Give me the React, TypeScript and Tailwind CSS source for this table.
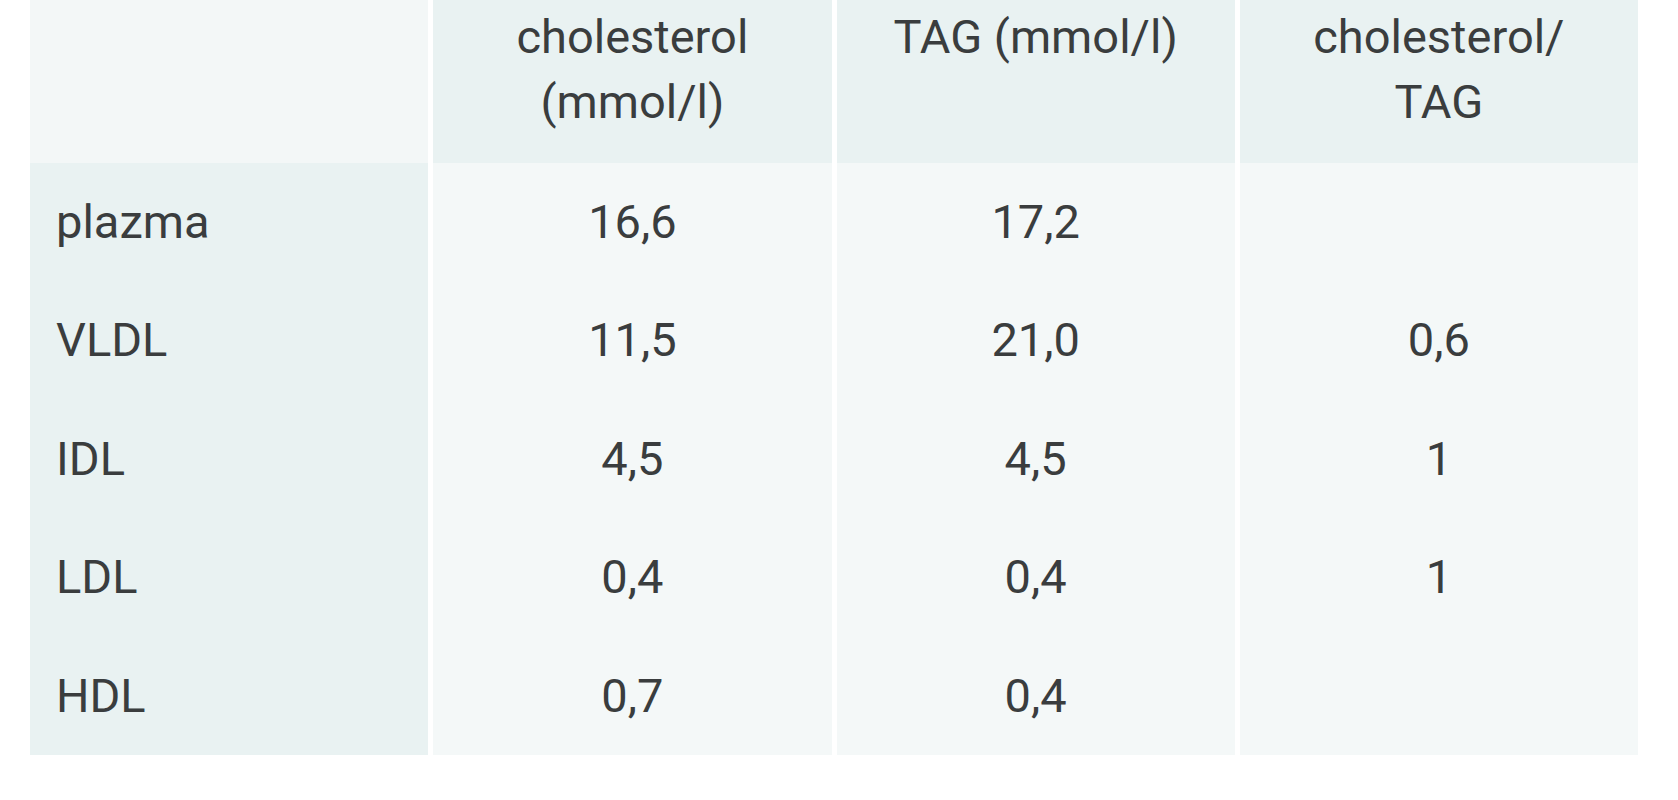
const head = [['cholesterol', '(mmol/l)'], ['TAG (mmol/l)'], ['cholesterol/', 'TAG']]

const rows = [
  { label: 'plazma', values: ['16,6', '17,2', ''] },
  { label: 'VLDL', values: ['11,5', '21,0', '0,6'] },
  { label: 'IDL', values: ['4,5', '4,5', '1'] },
  { label: 'LDL', values: ['0,4', '0,4', '1'] },
  { label: 'HDL', values: ['0,7', '0,4', ''] },
]

export default function App() {
  return (
    <div className="w-[1678px] h-[800px] bg-white font-['Roboto',sans-serif] text-[#3a3d3e] text-[47px]">
      <div className="ml-[30px] w-[1608px] grid grid-cols-4 gap-x-[5px] grid-rows-[163px_repeat(5,118.4px)]">
        {/* header row */}
        <div className="bg-[#f3f7f7]" />
        {head.map((lines) => (
          <div key={lines.join()} className="bg-[#e9f2f2] px-[10px] pt-[4px] text-center leading-[65px]">
            {lines.map((l) => (
              <div key={l}>{l}</div>
            ))}
          </div>
        ))}

        {/* body */}
        {rows.map((r) => (
          <div key={r.label} className="contents">
            <div className="bg-[#e9f2f2] flex items-center pl-[26px]">{r.label}</div>
            {r.values.map((v, i) => (
              <div key={i} className="bg-[#f4f8f8] flex items-center justify-center">
                {v}
              </div>
            ))}
          </div>
        ))}
      </div>
    </div>
  )
}
